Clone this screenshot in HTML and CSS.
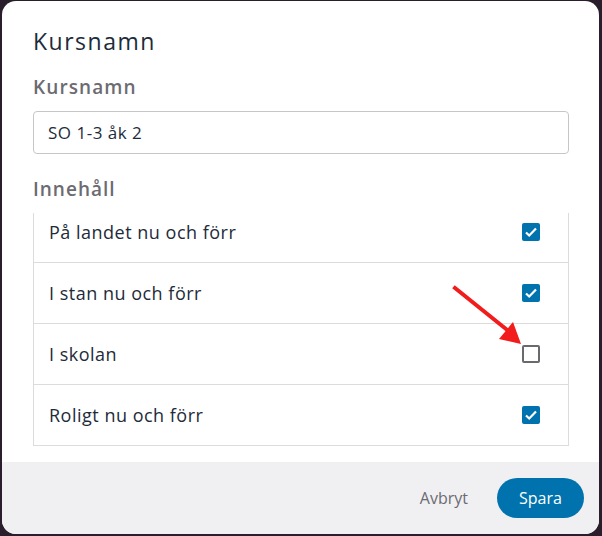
FILE: index.html
```html
<!DOCTYPE html>
<html lang="sv">
<head>
  <meta charset="UTF-8">
  <title>Kursnamn</title>
  <meta name="viewport" content="width=device-width, initial-scale=1.0">
  <link rel="stylesheet" href="styles.css">
</head>
<body>

<div class="modal">
  <div class="modal-body">
    <h2 class="modal-title">Kursnamn</h2>

    <label class="field-label" for="courseName">Kursnamn</label>
    <input class="text-input" type="text" id="courseName" value="SO 1-3 åk 2">

    <div class="field-label">Innehåll</div>
    <div class="content-list">
      <div class="content-row">
        <span>På landet nu och förr</span>
        <span class="check checked"></span>
      </div>
      <div class="content-row">
        <span>I stan nu och förr</span>
        <span class="check checked"></span>
      </div>
      <div class="content-row">
        <span>I skolan</span>
        <span class="check"></span>
      </div>
      <div class="content-row">
        <span>Roligt nu och förr</span>
        <span class="check checked"></span>
      </div>
    </div>
  </div>

  <div class="modal-footer">
    <button class="btn-text">Avbryt</button>
    <button class="btn-primary">Spara</button>
  </div>

  <!-- markering som pekar på den avbockade rutan -->
  <svg class="pointer" width="80" height="70" viewBox="0 0 80 70">
    <line x1="4" y1="4" x2="55" y2="45" stroke="#f21c1c" stroke-width="4" stroke-linecap="square"/>
    <polygon points="48,55 62,38 70,60" fill="#f21c1c"/>
  </svg>
</div>

</body>
</html>
```

FILE: styles.css
```css
body {
  margin: 0;
  background: #2a1d2c;
  font-family: "Open Sans", "Noto Sans", sans-serif;
}
.modal {
  position: relative;
  margin: 1px 0 0 2px;
  width: 597px;
  height: 533px;
  background: #fff;
  border-radius: 14px;
  overflow: hidden;
  display: flex;
  flex-direction: column;
}
.modal-body {
  flex: 1;
  padding: 25px 30px 0 31px;
}
.modal-title {
  margin: 0;
  font-size: 23px;
  line-height: 30px;
  font-weight: 400;
  letter-spacing: 1.5px;
  color: #1d2b3a;
}
.field-label {
  display: block;
  margin-top: 18px;
  font-size: 19px;
  line-height: 26px;
  font-weight: 600;
  letter-spacing: 1.1px;
  color: #6c6b72;
}
.text-input {
  display: block;
  margin-top: 11px;
  width: 100%;
  height: 43px;
  padding: 0 14px;
  box-sizing: border-box;
  border: 1px solid #c6c6c6;
  border-radius: 4px;
  font-family: inherit;
  font-size: 17px;
  letter-spacing: 0.5px;
  color: #1d2b3a;
}
.text-input + .field-label {
  margin-top: 22px;
  letter-spacing: 1px;
}
.content-list {
  margin-top: 11px;
  border: 1px solid #dcdcdc;
  border-top: none;
  overflow: hidden;
}
.content-row {
  display: flex;
  align-items: center;
  justify-content: space-between;
  height: 60px;
  padding: 0 28px 0 15px;
  border-bottom: 1px solid #dcdcdc;
  font-size: 18px;
  letter-spacing: 0.5px;
  color: #1d2b3a;
}
/* listan är lite nedscrollad */
.content-row:first-child {
  margin-top: -11px;
}
.content-row:last-child {
  border-bottom: none;
}
.check {
  width: 18px;
  height: 18px;
  box-sizing: border-box;
  border: 2px solid #6a6a6e;
  border-radius: 2px;
}
.check.checked {
  border: none;
  background: #0073ae url("data:image/svg+xml,%3Csvg xmlns='http://www.w3.org/2000/svg' viewBox='0 0 18 18'%3E%3Cpath d='M4 9.5l3.2 3L14 5.5' fill='none' stroke='white' stroke-width='2.2'/%3E%3C/svg%3E") center/18px 18px no-repeat;
}
.modal-footer {
  height: 72px;
  background: #f0f0f2;
  display: flex;
  align-items: center;
  justify-content: flex-end;
  padding-right: 15px;
}
.btn-text {
  margin-right: 15px;
  padding: 8px 14px;
  border: none;
  background: none;
  font-family: inherit;
  font-size: 16px;
  color: #6c6b72;
}
.btn-primary {
  width: 87px;
  height: 40px;
  border: none;
  border-radius: 20px;
  background: #0073ae;
  color: #fff;
  font-family: inherit;
  font-size: 16px;
  font-weight: 500;
}
.pointer {
  position: absolute;
  left: 449px;
  top: 283px;
}
```
